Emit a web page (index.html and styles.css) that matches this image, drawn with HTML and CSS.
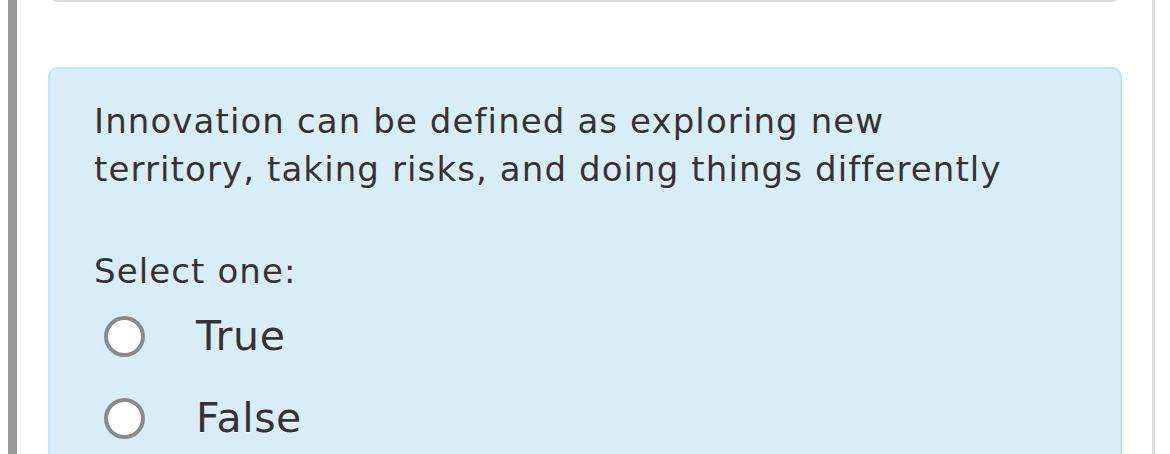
FILE: index.html
```html
<!DOCTYPE html>
<html>
<head>
<meta charset="utf-8">
<link rel="stylesheet" href="styles.css">
</head>
<body>
<div class="page">
  <div class="prev-card"></div>
  <div class="question">
    <p class="qtext">Innovation can be defined as exploring new territory, taking risks, and doing things differently</p>
    <p class="prompt">Select one:</p>
    <div class="answers">
      <label class="option"><span class="radio"></span><span class="label">True</span></label>
      <label class="option"><span class="radio"></span><span class="label">False</span></label>
    </div>
  </div>
</div>
</body>
</html>
```

FILE: styles.css
```css
html, body {
  margin: 0;
  padding: 0;
  background: #fff;
}
.page {
  margin-left: 8px;
  width: 1135px;
  height: 454px;
  overflow: hidden;
  border-left: 9px solid #999;
  border-right: 3px solid #ddd;
  box-sizing: content-box;
  font-family: "DejaVu Sans", Verdana, sans-serif;
  color: #333;
}
.prev-card {
  height: 40px;
  margin: -40px 32px 0 32px;
  border: 2px solid #ddd;
  border-top: none;
  border-radius: 0 0 8px 8px;
}
.question {
  margin: 65px 30px 0 31px;
  background: #d9edf7;
  border: 2px solid #bce8f1;
  border-bottom: none;
  border-radius: 10px 10px 0 0;
  padding: 28px 40px 0 44px;
  height: 400px;
  text-shadow: 0 1px 0 rgba(255, 255, 255, 0.6);
}
.qtext {
  margin: 0;
  font-size: 34px;
  line-height: 48px;
  letter-spacing: 1.1px;
  max-width: 930px;
}
.prompt {
  margin: 54px 0 0 0;
  font-size: 34px;
  line-height: 48px;
  letter-spacing: 1.1px;
}
.answers {
  display: flex;
  flex-direction: column;
}
.option {
  display: flex;
  align-items: center;
  height: 82px;
  font-size: 41px;
  letter-spacing: 0.6px;
}
.radio {
  width: 33px;
  height: 33px;
  border: 4px solid #8a8a8a;
  border-radius: 50%;
  background: #fff;
  margin-left: 10px;
  flex: none;
}
.label {
  margin-left: 51px;
}
```
